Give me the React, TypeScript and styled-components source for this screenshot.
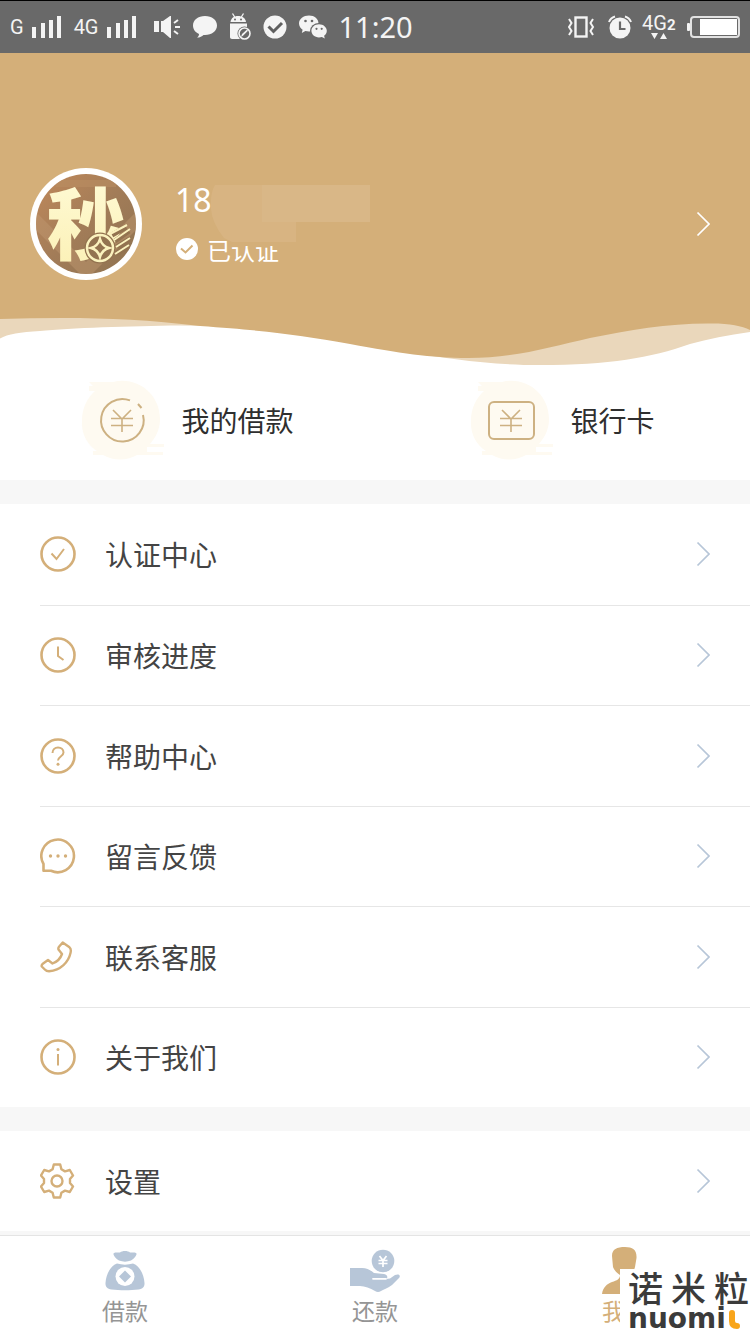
import React from "react";
import styled, { createGlobalStyle } from "styled-components";

const GOLD = "#d4af79";
const STEEL = "#b7c6d8";

const GlobalStyle = createGlobalStyle`
  * { box-sizing: border-box; }
  body {
    margin: 0;
    background: #f7f7f7;
    font-family: "Noto Sans CJK SC", "Noto Sans", sans-serif;
    -webkit-font-smoothing: antialiased;
  }
  a { color: inherit; text-decoration: none; }
  svg { display: block; flex: none; }
`;

const Page = styled.div`
  width: 100%;
  overflow: hidden;
`;

/* ---------- status bar ---------- */

const StatusBar = styled.header`
  display: flex;
  justify-content: space-between;
  align-items: center;
  height: 53px;
  padding: 0 10px;
  border-top: 1px solid #000;
  background: #696969;
  color: #f4f4f4;
`;

const StatusGroup = styled.div<{ $gap: number }>`
  display: flex;
  align-items: center;
  gap: ${(p) => p.$gap}px;
`;

const Network = styled.span`
  font: 20px/24px Roboto, sans-serif;
`;

const Clock = styled.time`
  font: 29px/36px "Noto Sans", sans-serif;
`;

const SignalBars = () => (
  <svg width="30" height="24" viewBox="0 0 30 24" fill="#f4f4f4" aria-hidden="true">
    <rect x="0" y="12" width="4" height="11" />
    <rect x="9" y="8" width="4" height="15" />
    <rect x="17" y="5" width="4" height="18" />
    <rect x="25" y="1" width="4" height="22" />
  </svg>
);

const SpeakerIcon = () => (
  <svg width="32" height="24" viewBox="0 0 32 24" fill="#f4f4f4" aria-hidden="true">
    <rect x="5" y="6" width="5" height="11" />
    <path d="M12 6h2l7-5h1v22h-1l-7-6h-2z" />
    <path d="M25 8l4-3M26 12h5M25 16l4 3" stroke="#f4f4f4" strokeWidth="2" />
  </svg>
);

const BubbleIcon = () => (
  <svg width="24" height="24" viewBox="0 0 24 24" fill="#f4f4f4" aria-hidden="true">
    <path d="M12 1C5 1 0 5 0 10.500c0 4 2.500 7 6 8.500 0 2-1 3-2 3.600 3 0 5-1.600 6.500-2.700C18 20.500 24 16.500 24 10.500 24 5 19 1 12 1z" />
  </svg>
);

const AndroidIcon = () => (
  <svg width="22" height="28" viewBox="0 0 22 28" fill="#f4f4f4" aria-hidden="true">
    <path d="M1.500 9C2 5 5 3 9 3s7.500 2 8 6z" />
    <path d="M3.500 0.500l2.500 4M14.500 0.500l-2.500 4" stroke="#f4f4f4" strokeWidth="1.300" />
    <circle cx="6" cy="6.500" r="1" fill="#696969" />
    <circle cx="12" cy="6.500" r="1" fill="#696969" />
    <path d="M1 10.500h17V26H3c-1.200 0-2-.8-2-2z" />
    <circle cx="15.500" cy="20.500" r="7" fill="#696969" />
    <circle cx="15.500" cy="20.500" r="5.500" fill="none" stroke="#f4f4f4" strokeWidth="1.600" />
    <path d="M12 24l1-3 5-4.500 1 1.200-5 5z" />
  </svg>
);

const RoundCheckIcon = () => (
  <svg width="24" height="24" viewBox="0 0 24 24" aria-hidden="true">
    <circle cx="12" cy="12" r="11.500" fill="#f4f4f4" />
    <path d="M5.500 11.500l5 5 8.500-8.500" fill="none" stroke="#5f5f5f" strokeWidth="3" />
  </svg>
);

const WechatIcon = () => (
  <svg width="28" height="26" viewBox="0 0 28 26" fill="#f4f4f4" aria-hidden="true">
    <path d="M10 1.500C4.500 1.500 0 5 0 9.500c0 2.600 1.500 4.800 3.600 6.200L2.800 19l3.600-1.900c1.200.3 2.400.5 3.600.5 5.500 0 9.500-3.600 9.500-8.100S15.500 1.500 10 1.500z" />
    <ellipse cx="20" cy="17" rx="9" ry="8" fill="#696969" />
    <path d="M20 10.200c-4.300 0-7.600 2.900-7.600 6.600s3.300 6.600 7.600 6.600c1 0 2-.2 2.900-.5l2.900 1.500-.7-2.600c1.800-1.300 2.700-3 2.700-5 0-3.700-3.500-6.600-7.800-6.600z" />
    <g fill="#696969">
      <circle cx="6.500" cy="7" r="1.300" />
      <circle cx="13" cy="7" r="1.300" />
      <circle cx="17.500" cy="14.800" r="1.100" />
      <circle cx="22.700" cy="14.800" r="1.100" />
    </g>
  </svg>
);

const VibrateIcon = () => (
  <svg width="30" height="24" viewBox="0 0 30 24" fill="none" stroke="#f4f4f4" aria-hidden="true">
    <rect x="7.500" y="2.500" width="11" height="19" strokeWidth="2.400" />
    <path d="M1 4l2.500 4L1 12l2.500 4L1 20M25 4l-2.500 4 2.500 4-2.500 4 2.500 4" strokeWidth="2" />
  </svg>
);

const AlarmIcon = () => (
  <svg width="24" height="24" viewBox="0 0 24 24" aria-hidden="true">
    <circle cx="12" cy="13" r="10.500" fill="#f4f4f4" />
    <path d="M1 7a9 9 0 0 1 6-5.500M23 7a9 9 0 0 0-6-5.500" fill="none" stroke="#f4f4f4" strokeWidth="2" />
    <path d="M12 6.500V14h5.500" fill="none" stroke="#696969" strokeWidth="2.200" />
  </svg>
);

const DataArrows = () => (
  <svg width="35" height="30" viewBox="0 0 35 30" fill="#f4f4f4" aria-label="4G2">
    <text x="0" y="18" fontFamily="Roboto, sans-serif" fontSize="20">4G</text>
    <text x="25" y="18" fontFamily="Roboto, sans-serif" fontSize="15" fontWeight="700">2</text>
    <path d="M9 21h7l-3.500 6zM18 27h7l-3.500-6z" />
  </svg>
);

const BatteryIcon = () => (
  <svg width="53" height="24" viewBox="0 0 53 24" aria-hidden="true">
    <rect x="0" y="8" width="3" height="8" rx="1" fill="#f4f4f4" />
    <rect x="4" y="2" width="48" height="20" rx="3" fill="none" stroke="#e2e2e2" strokeWidth="2" />
    <rect x="13" y="4" width="37" height="16" fill="#fff" />
  </svg>
);

/* ---------- profile ---------- */

const Profile = styled.a`
  display: flex;
  align-items: center;
  height: 257px;
  padding: 85px 40px 0 30px;
  background: ${GOLD};
  color: #fff;
`;

const ProfileText = styled.div`
  position: relative;
  flex: 1;
  margin-left: 33px;
`;

const Phone = styled.div`
  font: 32px/50px "Noto Sans", sans-serif;
`;

const Verified = styled.div`
  display: flex;
  align-items: center;
  gap: 8px;
  height: 48px;
  font-size: 24px;
`;

const PhoneCover = styled.svg`
  position: absolute;
  left: 35px;
  top: 10px;
`;

const Wave = styled.svg`
  width: 100%;
  height: 56px;
  background: #fff;
`;

const Avatar = () => (
  <svg width="112" height="112" viewBox="0 0 112 112" role="img" aria-label="头像">
    <defs>
      <clipPath id="disc"><circle cx="56" cy="56" r="50" /></clipPath>
      <linearGradient id="bronze" x1="0" y1="0" x2="1" y2="1">
        <stop offset="0" stopColor="#c48a5a" />
        <stop offset="0.500" stopColor="#a27c58" />
        <stop offset="1" stopColor="#8c7250" />
      </linearGradient>
      <linearGradient id="cream" x1="0" y1="0" x2="0" y2="1">
        <stop offset="0" stopColor="#fffbd8" />
        <stop offset="1" stopColor="#fbf0b4" />
      </linearGradient>
    </defs>
    <circle cx="56" cy="56" r="56" fill="#fff" />
    <g clipPath="url(#disc)">
      <rect width="112" height="112" fill="url(#bronze)" />
      <path d="M0 38l56 56 56-56v18l-56 56L0 56z" fill="#c09a70" opacity=".45" />
      <path d="M26 12h60v7H26z" fill="#b98e62" opacity=".6" />
      <text x="17" y="86" fontFamily="'Noto Sans CJK SC', sans-serif" fontSize="78" fontWeight="900" fill="url(#cream)">秒</text>
      <circle cx="70" cy="80" r="15.500" fill="#937350" />
      <g fill="none" stroke="#fbf2be" strokeWidth="2.500">
        <path d="M82 67l14-8M85 73l14-10M87 79l13-8M86 86l13-8" stroke="#937350" strokeWidth="5" />
        <path d="M80 66l17-9M84 72l16-11M86 79l14-9M85 86l14-9" strokeWidth="2" />
        <circle cx="70" cy="80" r="13" />
        <path d="M70 71q2 7 9 9q-7 2-9 9q-2-7-9-9q7-2 9-9z" />
      </g>
    </g>
  </svg>
);

const Chevron = ({ color }: { color: string }) => (
  <svg width="14" height="26" viewBox="0 0 14 26" fill="none" stroke={color} strokeWidth="1.700" aria-hidden="true">
    <path d="M1.500 1.500L13 13 1.500 24.500" />
  </svg>
);

/* ---------- shortcuts ---------- */

const Shortcuts = styled.nav`
  display: grid;
  grid-template-columns: 1fr 1fr;
  padding: 14px 0 20px;
  background: #fff;
`;

const Shortcut = styled.a`
  display: flex;
  align-items: center;
  justify-content: center;
  gap: 20px;
  color: #2f2f2f;
  font-size: 28px;
  line-height: 40px;
`;

const ShortcutIcon = ({ card }: { card?: boolean }) => (
  <svg width="80" height="80" viewBox="0 0 80 80" overflow="visible" aria-hidden="true">
    <path
      d="M8 2h24C56-4 79 14 79 39c0 10-4 18-10 25h14v3H66v5h16v3H56C48 80 34 82 22 75H12v-4h4C5 64 0 52 1 40 1 29 6 18 14 11H8V6h4z"
      fill="#fefaf1"
    />
    <g fill="none" stroke="#cdb182" strokeWidth="2">
      {card ? (
        <rect x="19" y="22" width="45" height="37" rx="5" />
      ) : (
        <path d="M49 20.400A21.300 21.300 0 1 0 62 35M57 24l3.500 4" />
      )}
      <path d="M32 30l9 9 9-9M30 38.500h22M30 45.500h22M41 39v13" strokeWidth="1.600" />
    </g>
  </svg>
);

/* ---------- menu ---------- */

const Menu = styled.nav<{ $height: number }>`
  display: grid;
  grid-auto-rows: 1fr;
  min-height: ${(p) => p.$height}px;
  padding-left: 40px;
  background: #fff;
`;

const MenuRow = styled.a`
  display: flex;
  align-items: center;
  gap: 29px;
  padding-right: 40px;
  color: #444;
  font-size: 28px;
  line-height: 40px;
  & + & { border-top: 1px solid #e6e6e6; }
`;

const RowLabel = styled.span`
  flex: 1;
`;

const Spacer = styled.div<{ $height: number }>`
  height: ${(p) => p.$height}px;
`;

const Ring = () => <circle cx="18" cy="18" r="16.500" />;

const icons = {
  check: <><Ring /><path d="M11.500 17.500l5 5.500 7.500-10" strokeWidth="2" /></>,
  clock: <><Ring /><path d="M18 9.500V19l5.500 4" strokeWidth="2" /></>,
  help: (
    <>
      <Ring />
      <path d="M12.500 15c0-3.500 2.500-5.500 5.500-5.500s5.500 2 5.500 5c0 4-5.500 4-5.500 8" strokeWidth="2" />
      <circle cx="18" cy="26.300" r="1.500" fill={GOLD} stroke="none" />
    </>
  ),
  message: (
    <>
      <path d="M3.500 32.800V26A16.300 16.300 0 1 1 11 32.800z" strokeLinejoin="round" />
      <g fill={GOLD} stroke="none">
        <circle cx="10.500" cy="18" r="1.700" />
        <circle cx="18" cy="18" r="1.700" />
        <circle cx="25.500" cy="18" r="1.700" />
      </g>
    </>
  ),
  phone: (
    <path
      d="M22.700 3.500L29.500 8.300Q31.500 10 30.500 14C28.500 23 21 31 9 32.300Q6.500 32.300 4.800 30.500L1.800 27.500Q1.200 26 2.800 24.700L8 21L12.500 24.500C16.500 23 20.500 19.500 22 15L18.500 10.500Q18 9 19 7.700z"
      strokeLinejoin="round"
      strokeWidth="2.400"
    />
  ),
  info: (
    <>
      <Ring />
      <path d="M18 15v11.500" strokeWidth="2" />
      <circle cx="18" cy="10.500" r="1.500" fill={GOLD} stroke="none" />
    </>
  ),
  gear: (
    <>
      <path
        d="M13.800 1.500h6.400l1.200 4.800 3.600 2.100 4.800-1.400 3.200 5.500-3 3.500v4l3 3.500-3.200 5.500-4.800-1.400-3.600 2.100-1.200 4.800h-6.400l-1.200-4.800-3.600-2.100-4.800 1.400L1 23.500 4 20v-4l-3-3.500L4.200 7l4.800 1.400 3.600-2.100z"
        strokeLinejoin="round"
        strokeWidth="2.400"
      />
      <circle cx="17" cy="18" r="5.500" strokeWidth="2.400" />
    </>
  ),
};

type IconName = keyof typeof icons;

const MenuItem = ({ icon, label }: { icon: IconName; label: string }) => (
  <MenuRow href="#">
    <svg width="36" height="36" viewBox="0 0 36 36" fill="none" stroke={GOLD} strokeWidth="2.600" aria-hidden="true">
      {icons[icon]}
    </svg>
    <RowLabel>{label}</RowLabel>
    <Chevron color={STEEL} />
  </MenuRow>
);

const menu: { icon: IconName; label: string }[] = [
  { icon: "check", label: "认证中心" },
  { icon: "clock", label: "审核进度" },
  { icon: "help", label: "帮助中心" },
  { icon: "message", label: "留言反馈" },
  { icon: "phone", label: "联系客服" },
  { icon: "info", label: "关于我们" },
];

/* ---------- tab bar ---------- */

const TabBar = styled.nav`
  position: relative;
  display: grid;
  grid-template-columns: repeat(3, 1fr);
  height: 99px;
  border-top: 1px solid #e4e4e4;
  background: #fff;
`;

const Tab = styled.a<{ $active?: boolean }>`
  display: flex;
  flex-direction: column;
  align-items: center;
  padding-top: 10px;
  color: ${(p) => (p.$active ? GOLD : "#959595")};
  font-size: 23px;
  line-height: 36px;
`;

const BagIcon = () => (
  <svg width="50" height="46" viewBox="0 0 50 46" fill={STEEL} aria-hidden="true">
    <path d="M19 14.500C16 13 13 9 13.500 7.500c1.500-2 4.500-.5 6.500-1C22 4.500 28 4.500 30 6.500c2 .5 5-1 6.500 1 .5 1.500-2.500 5.500-5.500 7-4 1.500-8 1.500-12 0z" />
    <path d="M17 17.500c5 1.500 11 1.500 16 0C40 20 44 29 44.500 37c.2 4-1.500 6-6 6.500-8 1-19 1-27 0-4.500-.5-6.200-2.500-6-6.500C6 29 10 20 17 17.500z" />
    <circle cx="25" cy="30.500" r="9.500" fill="#fff" />
    <path d="M25 24.500l6 6-6 6-6-6z" />
  </svg>
);

const HandCoinIcon = () => (
  <svg width="50" height="46" viewBox="0 0 50 46" fill={STEEL} aria-hidden="true">
    <path d="M0 22h10c6-.5 9 1 14 5l10 1c4 .5 4 4.500 2 5l4-.5 5-3.500c4-1.500 6 .5 4 3l-7 7c-4 3-8 4-11 6-2 1.200-4 1.200-6 0-5-3-10-4.500-15-5H0z" />
    <path d="M23 32.800h13" fill="none" stroke="#fff" strokeWidth="1.800" strokeLinecap="round" />
    <circle cx="33" cy="15" r="11.300" />
    <path d="M29.500 10l3.500 4.500 3.500-4.500M28.500 14.500h9M28.500 17.500h9M33 14.500V21" fill="none" stroke="#fff" strokeWidth="1.700" />
  </svg>
);

const PersonIcon = () => (
  <svg width="50" height="46" viewBox="0 0 50 46" fill={GOLD} overflow="visible" aria-hidden="true">
    <path d="M12 10C12 3 17 1 25 1s12 3 11.500 11L35 21c-1 4-3 6-5 8 0 4 2 5 6 6.500 6 3 12 6 12 12.500H2c1-7 5-10 10-12 5-1.500 8-3 8-7-4-3-6-5-7-8z" />
  </svg>
);

const Watermark = styled.div`
  position: absolute;
  right: 0;
  bottom: 0;
  width: 130px;
  height: 65px;
  padding: 0 1px 0 8px;
  background: #fff;
  color: #3b3b3b;
`;

const BrandName = styled.div`
  display: flex;
  justify-content: space-between;
  font-size: 35px;
  line-height: 36px;
  font-weight: 500;
`;

const BrandLatin = styled.div`
  display: flex;
  font: 700 28px/28px "DejaVu Sans", sans-serif;
`;

export default function App() {
  return (
    <Page>
      <GlobalStyle />
      <StatusBar>
        <StatusGroup $gap={12}>
          <StatusGroup $gap={8}>
            <Network>G</Network>
            <SignalBars />
          </StatusGroup>
          <StatusGroup $gap={8}>
            <Network>4G</Network>
            <SignalBars />
          </StatusGroup>
          <SpeakerIcon />
          <BubbleIcon />
          <AndroidIcon />
          <RoundCheckIcon />
          <WechatIcon />
          <Clock>11:20</Clock>
        </StatusGroup>
        <StatusGroup $gap={10}>
          <VibrateIcon />
          <AlarmIcon />
          <DataArrows />
          <BatteryIcon />
        </StatusGroup>
      </StatusBar>

      <main>
        <Profile href="#">
          <Avatar />
          <ProfileText>
            <Phone>18</Phone>
            <Verified>
              <svg width="24" height="24" viewBox="0 0 24 24" aria-hidden="true">
                <circle cx="12" cy="12" r="11" fill="#fff" />
                <path d="M6 11.500l4.500 4 7-7" fill="none" stroke={GOLD} strokeWidth="2" />
              </svg>
              <span>已认证</span>
            </Verified>
            <PhoneCover width="160" height="64" viewBox="0 0 160 64" aria-hidden="true">
              <path d="M22 54h60v7H22z" fill={GOLD} />
              <path d="M5 0h155v37H86v20H22l-8-4Q2 38 1 24 0 8 5 0z" fill="#d8b482" />
              <path d="M52 0h108v37H52z" fill="#d9b787" />
            </PhoneCover>
          </ProfileText>
          <Chevron color="#fff" />
        </Profile>
        <Wave viewBox="0 0 750 56" preserveAspectRatio="none" aria-hidden="true">
          <path
            d="M0 0H750V22C728 25 708 29 690 34C650 48 610 55 540 55C490 55 450 49 400 41L290 23C250 17 215 15.500 180 15.500C130 16 70 18 40 21C20 22 8 24 0 28.500z"
            fill="#ead7bb"
          />
          <path
            d="M0 0H750V20C742 16 730 13.500 712 13.500C670 13 630 20 590 28C550 37 515 48 468 48C430 48 400 43 350 34C300 25 270 21 200 16C150 10 110 8 62 8Q30 8 0 9z"
            fill={GOLD}
          />
        </Wave>

        <Shortcuts>
          <Shortcut href="#"><ShortcutIcon />我的借款</Shortcut>
          <Shortcut href="#"><ShortcutIcon card />银行卡</Shortcut>
        </Shortcuts>
        <Spacer $height={24} />
        <Menu $height={603}>
          {menu.map((m) => <MenuItem key={m.label} {...m} />)}
        </Menu>
        <Spacer $height={24} />
        <Menu $height={100}>
          <MenuItem icon="gear" label="设置" />
        </Menu>
        <Spacer $height={4} />
      </main>

      <TabBar>
        <Tab href="#"><BagIcon />借款</Tab>
        <Tab href="#"><HandCoinIcon />还款</Tab>
        <Tab href="#" $active><PersonIcon />我的</Tab>
        <Watermark>
          <BrandName><span>诺</span><span>米</span><span>粒</span></BrandName>
          <BrandLatin>
            nuomi
            <svg width="16" height="28" viewBox="0 0 16 28" aria-hidden="true">
              <path d="M6 8v8q0 5 5 5" fill="none" stroke="#f8a51b" strokeWidth="6" strokeLinecap="round" />
            </svg>
          </BrandLatin>
        </Watermark>
      </TabBar>
    </Page>
  );
}
